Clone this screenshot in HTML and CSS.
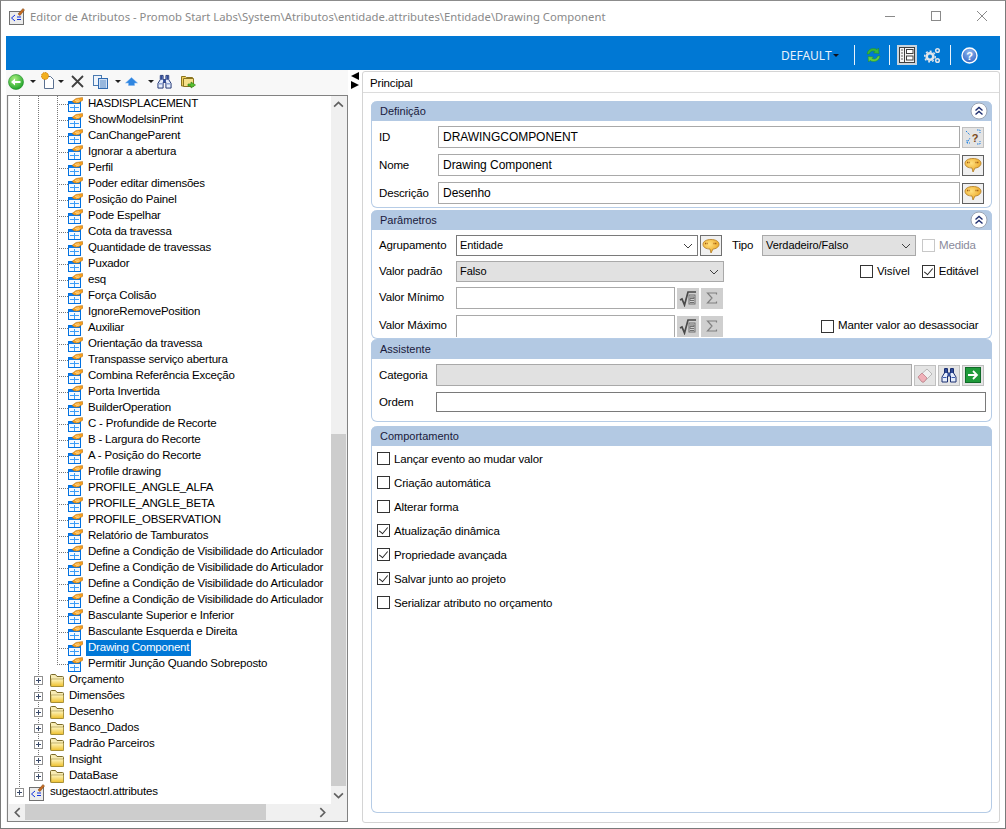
FILE: index.html
```html
<!DOCTYPE html>
<html lang="pt">
<head>
<meta charset="utf-8">
<title>Editor de Atributos</title>
<link rel="stylesheet" href="styles.css">
</head>
<body>
<svg class="defs" width="0" height="0" aria-hidden="true">
  <defs>
    <linearGradient id="gf" x1="0" y1="0" x2="0" y2="1"><stop offset="0" stop-color="#fff6c0"/><stop offset="1" stop-color="#eec02c"/></linearGradient>
    <radialGradient id="gb" cx=".4" cy=".35" r=".8"><stop offset="0" stop-color="#ffe080"/><stop offset="1" stop-color="#e89a10"/></radialGradient>
    <radialGradient id="gg" cx=".4" cy=".3" r=".8"><stop offset="0" stop-color="#a8f080"/><stop offset="1" stop-color="#109a20"/></radialGradient>
    <radialGradient id="gh" cx=".5" cy=".3" r=".8"><stop offset="0" stop-color="#8fb8f0"/><stop offset="1" stop-color="#2a5cc0"/></radialGradient>
    <symbol id="attr" viewBox="0 0 15 15">
      <rect x="0.5" y="4.5" width="12" height="10" fill="#f4f9ff" stroke="#0070e0"/>
      <rect x="1" y="5" width="11" height="2" fill="#0a7cf0"/>
      <path d="M6.5 8v6M2 10.500h9" stroke="#3a9cf8"/>
      <path d="M4 4.500 8 1.500 14.500 0.500 15 3 10.500 6 6.500 6z" fill="#f8a020" stroke="#a86810" stroke-width=".5"/>
      <path d="M7 3.500 11 2.800M8 5l4-1.200" stroke="#ffe8b0" stroke-width=".7"/>
    </symbol>
    <symbol id="folder" viewBox="0 0 16 16">
      <path d="M1.500 13.500V3.500q0-1 1-1h4l1.500 2h5.500q1 0 1 1v8q0 1-1 1h-11q-1 0-1-1z" fill="#f8ecb4" stroke="#7a6a2a"/>
      <path d="M2 7h12.500v7.500H2z" fill="url(#gf)" stroke="#a08c3a" stroke-width=".6"/>
    </symbol>
    <symbol id="xml" viewBox="0 0 16 17">
      <rect x="0.500" y="3.500" width="14" height="13" fill="#ececec" stroke="#707070"/>
      <path d="M6 7 2.500 10 6 13" fill="none" stroke="#1030e0"/>
      <path d="M8 9h4M8 11.500h4" stroke="#1030e0"/>
      <path d="M9 6 14 0.500l1.500 1.500L11 7.500z" fill="#c86a20" stroke="#704010" stroke-width=".5"/>
    </symbol>
    <symbol id="bubble" viewBox="0 0 18 18">
      <path d="M9 2.500c4.500 0 8 1.800 8 4.800s-3.500 4.700-6 4.700l-2 4-1-4C4 12 1 10.300 1 7.300S4.500 2.500 9 2.500z" fill="url(#gb)" stroke="#b07a20" stroke-width=".8"/>
      <path d="M3 6.500h3M11.500 6.500h3.500" stroke="#a05a10" stroke-width="1.500" stroke-dasharray="1 .6"/>
    </symbol>
    <symbol id="binoc" viewBox="0 0 16 16">
      <path d="M3.500 1.500h3V6h3V1.500h3V6l2.500 4v5H9.500V9h-3v6H1v-5l2.500-4z" fill="#e6eefc" stroke="#1a2f70"/>
      <path d="M4 2h2v4H4zM10 2h2v4h-2zM6.500 6h3v3h-3z" fill="#2f4a98"/>
      <path d="M2 10h3.500v1H2zM10.500 10H14v1h-3.500z" fill="#3a5ab0"/>
    </symbol>
    <symbol id="sqrt" viewBox="0 0 18 18">
      <path d="M1 11l2-1 2.500 6L9 3h8" fill="none" stroke="#4a4a4a" stroke-width="1.700"/>
      <rect x="10" y="6" width="6" height="9" fill="none" stroke="#707070"/>
      <path d="M11 8h4v1.500h-4v2h4M11 13.500h4" fill="none" stroke="#707070"/>
    </symbol>
    <symbol id="sigma" viewBox="0 0 12 12">
      <path d="M10.500 2.500V1h-9l4.500 5-4.500 5h9V9.500" fill="none" stroke="#808080" stroke-width="1.200"/>
    </symbol>
    <symbol id="chev" viewBox="0 0 10 6">
      <path d="M1 1l4 4 4-4" fill="none" stroke="#404040" stroke-width="1"/>
    </symbol>
    <symbol id="coll" viewBox="0 0 18 18">
      <circle cx="9" cy="9" r="8" fill="#fff" stroke="#9aa4b4"/>
      <path d="M5.500 8.500 9 5.500l3.500 3M5.500 12.500 9 9.500l3.500 3" fill="none" stroke="#1f2f70" stroke-width="1.400"/>
    </symbol>
  </defs>
</svg>

<div class="window">
  <header class="titlebar">
    <svg class="app-icon" width="16" height="17"><use href="#xml"/></svg>
    <span class="title">Editor de Atributos - Promob Start Labs\System\Atributos\entidade.attributes\Entidade\Drawing Component</span>
    <div class="winctl">
      <svg width="12" height="12" viewBox="0 0 12 12"><path d="M1 6.500h10" stroke="#8a8a8a"/></svg>
      <svg width="12" height="12" viewBox="0 0 12 12"><rect x="1.500" y="1.500" width="9" height="9" fill="none" stroke="#8a8a8a"/></svg>
      <svg width="12" height="12" viewBox="0 0 12 12"><path d="M1 1l10 10M11 1 1 11" stroke="#8a8a8a"/></svg>
    </div>
  </header>

  <div class="bluebar">
    <span class="bb-default">DEFAULT</span>
    <span class="bb-caret"></span>
    <span class="bb-sep"></span>
    <svg class="bb-refresh" width="17" height="18" viewBox="0 0 17 18">
      <path d="M2 8c.5-3.500 3-5.500 6.500-5.500 1.500 0 2.500.5 3.500 1l1.500-1.500.5 5.500-5.500-.5 1.500-1.500c-2.500-1-5-.5-5.500 2.500z" fill="#3ab83a" stroke="#1f8a2a" stroke-width=".5"/>
      <path d="M15 10c-.5 3.500-3 5.500-6.500 5.500-1.500 0-2.500-.5-3.500-1L3.500 16 3 10.500l5.500.5L7 12.500c2.500 1 5 .5 5.500-2.500z" fill="#63d040" stroke="#1f8a2a" stroke-width=".5"/>
    </svg>
    <span class="bb-sep sep2"></span>
    <span class="bb-layout">
      <svg width="16" height="16" viewBox="0 0 16 16">
        <rect x=".5" y=".5" width="15" height="15" fill="#f4f4f4" stroke="#404040"/>
        <path d="M5.500 1v14" stroke="#404040"/>
        <path d="M2 3h2M2 6h2M2 9h2M2 12h2" stroke="#606060"/>
        <rect x="7.500" y="2.500" width="6.500" height="4" fill="#fff" stroke="#404040"/>
        <rect x="7.500" y="9" width="6.500" height="4" fill="#fff" stroke="#404040"/>
      </svg>
    </span>
    <svg class="bb-gear" width="17" height="17" viewBox="0 0 17 17">
      <circle cx="6" cy="9.500" r="3.300" fill="none" stroke="#e0e4ea" stroke-width="2.600"/>
      <circle cx="6" cy="9.500" r="5.300" fill="none" stroke="#e0e4ea" stroke-width="1.500" stroke-dasharray="2 2"/>
      <circle cx="13.500" cy="3.500" r="1.800" fill="none" stroke="#e0e4ea" stroke-width="1.500"/>
      <circle cx="13.500" cy="13.500" r="1.800" fill="none" stroke="#e0e4ea" stroke-width="1.500"/>
    </svg>
    <span class="bb-sep sep3"></span>
    <svg class="bb-help" width="17" height="17" viewBox="0 0 17 17">
      <circle cx="8.500" cy="8.500" r="7.500" fill="url(#gh)" stroke="#fff" stroke-width="1.400"/>
      <text x="8.500" y="12.500" class="help-q">?</text>
    </svg>
  </div>

  <main class="content">
    <section class="left">
      <div class="toolbar">
        <svg class="t-back" width="16" height="16" viewBox="0 0 16 16"><circle cx="8" cy="8" r="7.500" fill="url(#gg)" stroke="#1a8a20" stroke-width=".6"/><path d="M3 8l4-3.500V7h5.500v2H7v2.500z" fill="#fff"/></svg>
        <span class="caret c1"></span>
        <svg class="t-new" width="15" height="17" viewBox="0 0 15 17"><path d="M3.500 4.500h6l3 3v9h-9z" fill="#fff" stroke="#5a7090"/><circle cx="4" cy="4" r="3.500" fill="#f2b020" stroke="#d08010" stroke-dasharray="1.500 .8"/></svg>
        <span class="caret c2"></span>
        <svg class="t-x" width="13" height="13" viewBox="0 0 13 13"><path d="M1 1l11 11M12 1 1 12" stroke="#404040" stroke-width="1.800"/></svg>
        <svg class="t-copy" width="15" height="14" viewBox="0 0 15 14"><rect x=".5" y=".5" width="8" height="10" fill="#eef4fc" stroke="#4a7ab0"/><rect x="5.500" y="3.500" width="9" height="10" fill="#cfe0f6" stroke="#2f6ab0"/><path d="M7 6h6M7 8h6M7 10h6M7 12h6" stroke="#2f6ab0" stroke-width=".7"/></svg>
        <span class="caret c3"></span>
        <svg class="t-up" width="13" height="9" viewBox="0 0 13 9"><path d="M6.500.5l6 5.500H9.500v2.500h-6V6H.5z" fill="#2f86e0" stroke="#7ab0f0" stroke-width=".5"/></svg>
        <span class="caret c4"></span>
        <svg class="t-bin" width="15" height="15"><use href="#binoc"/></svg>
        <svg class="t-fold" width="15" height="15" viewBox="0 0 15 15"><path d="M.5 12V2.500h4l1 1h6v8.500z" fill="#f0d060" stroke="#8a7420"/><path d="M2.500 4.500h10v8h-10z" fill="#f6e08a" stroke="#8a7420"/><path d="M7 10h3V8l4.500 3-4.500 3v-2H7z" fill="#58c030" stroke="#2a7a18" stroke-width=".6"/></svg>
      </div>
      <div class="treebox">
        <div class="tree-main">
          <div class="tree">
            <div class="g g1">
              <div class="g g2">
                <div class="g g3">
                  <div class="row leaf"><svg class="ic" width="15" height="15"><use href="#attr"/></svg><span class="lb">HASDISPLACEMENT</span></div>
                  <div class="row leaf"><svg class="ic" width="15" height="15"><use href="#attr"/></svg><span class="lb">ShowModelsinPrint</span></div>
                  <div class="row leaf"><svg class="ic" width="15" height="15"><use href="#attr"/></svg><span class="lb">CanChangeParent</span></div>
                  <div class="row leaf"><svg class="ic" width="15" height="15"><use href="#attr"/></svg><span class="lb">Ignorar a abertura</span></div>
                  <div class="row leaf"><svg class="ic" width="15" height="15"><use href="#attr"/></svg><span class="lb">Perfil</span></div>
                  <div class="row leaf"><svg class="ic" width="15" height="15"><use href="#attr"/></svg><span class="lb">Poder editar dimensões</span></div>
                  <div class="row leaf"><svg class="ic" width="15" height="15"><use href="#attr"/></svg><span class="lb">Posição do Painel</span></div>
                  <div class="row leaf"><svg class="ic" width="15" height="15"><use href="#attr"/></svg><span class="lb">Pode Espelhar</span></div>
                  <div class="row leaf"><svg class="ic" width="15" height="15"><use href="#attr"/></svg><span class="lb">Cota da travessa</span></div>
                  <div class="row leaf"><svg class="ic" width="15" height="15"><use href="#attr"/></svg><span class="lb">Quantidade de travessas</span></div>
                  <div class="row leaf"><svg class="ic" width="15" height="15"><use href="#attr"/></svg><span class="lb">Puxador</span></div>
                  <div class="row leaf"><svg class="ic" width="15" height="15"><use href="#attr"/></svg><span class="lb">esq</span></div>
                  <div class="row leaf"><svg class="ic" width="15" height="15"><use href="#attr"/></svg><span class="lb">Força Colisão</span></div>
                  <div class="row leaf"><svg class="ic" width="15" height="15"><use href="#attr"/></svg><span class="lb">IgnoreRemovePosition</span></div>
                  <div class="row leaf"><svg class="ic" width="15" height="15"><use href="#attr"/></svg><span class="lb">Auxiliar</span></div>
                  <div class="row leaf"><svg class="ic" width="15" height="15"><use href="#attr"/></svg><span class="lb">Orientação da travessa</span></div>
                  <div class="row leaf"><svg class="ic" width="15" height="15"><use href="#attr"/></svg><span class="lb">Transpasse serviço abertura</span></div>
                  <div class="row leaf"><svg class="ic" width="15" height="15"><use href="#attr"/></svg><span class="lb">Combina Referência Exceção</span></div>
                  <div class="row leaf"><svg class="ic" width="15" height="15"><use href="#attr"/></svg><span class="lb">Porta Invertida</span></div>
                  <div class="row leaf"><svg class="ic" width="15" height="15"><use href="#attr"/></svg><span class="lb">BuilderOperation</span></div>
                  <div class="row leaf"><svg class="ic" width="15" height="15"><use href="#attr"/></svg><span class="lb">C - Profundide de Recorte</span></div>
                  <div class="row leaf"><svg class="ic" width="15" height="15"><use href="#attr"/></svg><span class="lb">B - Largura do Recorte</span></div>
                  <div class="row leaf"><svg class="ic" width="15" height="15"><use href="#attr"/></svg><span class="lb">A - Posição do Recorte</span></div>
                  <div class="row leaf"><svg class="ic" width="15" height="15"><use href="#attr"/></svg><span class="lb">Profile drawing</span></div>
                  <div class="row leaf"><svg class="ic" width="15" height="15"><use href="#attr"/></svg><span class="lb">PROFILE_ANGLE_ALFA</span></div>
                  <div class="row leaf"><svg class="ic" width="15" height="15"><use href="#attr"/></svg><span class="lb">PROFILE_ANGLE_BETA</span></div>
                  <div class="row leaf"><svg class="ic" width="15" height="15"><use href="#attr"/></svg><span class="lb">PROFILE_OBSERVATION</span></div>
                  <div class="row leaf"><svg class="ic" width="15" height="15"><use href="#attr"/></svg><span class="lb">Relatório de Tamburatos</span></div>
                  <div class="row leaf"><svg class="ic" width="15" height="15"><use href="#attr"/></svg><span class="lb">Define a Condição de Visibilidade do Articulador</span></div>
                  <div class="row leaf"><svg class="ic" width="15" height="15"><use href="#attr"/></svg><span class="lb">Define a Condição de Visibilidade do Articulador</span></div>
                  <div class="row leaf"><svg class="ic" width="15" height="15"><use href="#attr"/></svg><span class="lb">Define a Condição de Visibilidade do Articulador</span></div>
                  <div class="row leaf"><svg class="ic" width="15" height="15"><use href="#attr"/></svg><span class="lb">Define a Condição de Visibilidade do Articulador</span></div>
                  <div class="row leaf"><svg class="ic" width="15" height="15"><use href="#attr"/></svg><span class="lb">Basculante Superior e Inferior</span></div>
                  <div class="row leaf"><svg class="ic" width="15" height="15"><use href="#attr"/></svg><span class="lb">Basculante Esquerda e Direita</span></div>
                  <div class="row leaf"><svg class="ic" width="15" height="15"><use href="#attr"/></svg><span class="lb sel">Drawing Component</span></div>
                  <div class="row leaf"><svg class="ic" width="15" height="15"><use href="#attr"/></svg><span class="lb">Permitir Junção Quando Sobreposto</span></div>
                </div>
                <div class="row fold"><span class="plus"></span><svg class="ic" width="16" height="16"><use href="#folder"/></svg><span class="lb">Orçamento</span></div>
                <div class="row fold"><span class="plus"></span><svg class="ic" width="16" height="16"><use href="#folder"/></svg><span class="lb">Dimensões</span></div>
                <div class="row fold"><span class="plus"></span><svg class="ic" width="16" height="16"><use href="#folder"/></svg><span class="lb">Desenho</span></div>
                <div class="row fold"><span class="plus"></span><svg class="ic" width="16" height="16"><use href="#folder"/></svg><span class="lb">Banco_Dados</span></div>
                <div class="row fold"><span class="plus"></span><svg class="ic" width="16" height="16"><use href="#folder"/></svg><span class="lb">Padrão Parceiros</span></div>
                <div class="row fold"><span class="plus"></span><svg class="ic" width="16" height="16"><use href="#folder"/></svg><span class="lb">Insight</span></div>
                <div class="row fold"><span class="plus"></span><svg class="ic" width="16" height="16"><use href="#folder"/></svg><span class="lb">DataBase</span></div>
              </div>
              <div class="row root"><span class="plus"></span><svg class="ic" width="16" height="17"><use href="#xml"/></svg><span class="lb">sugestaoctrl.attributes</span></div>
            </div>
          </div>
          <div class="vscroll">
            <svg width="11" height="7" viewBox="0 0 10 6"><path d="M1 5l4-4 4 4" fill="none" stroke="#606060" stroke-width="1.500"/></svg>
            <span class="vtrack"><span class="vthumb"></span></span>
            <svg width="11" height="7" viewBox="0 0 10 6"><path d="M1 1l4 4 4-4" fill="none" stroke="#606060" stroke-width="1.500"/></svg>
          </div>
        </div>
        <div class="hscroll">
          <svg width="7" height="11" viewBox="0 0 6 10"><path d="M5 1 1 5l4 4" fill="none" stroke="#606060" stroke-width="1.500"/></svg>
          <span class="htrack"><span class="hthumb"></span></span>
          <svg width="7" height="11" viewBox="0 0 6 10"><path d="M1 1l4 4-4 4" fill="none" stroke="#606060" stroke-width="1.500"/></svg>
        </div>
      </div>
    </section>

    <div class="splitter"><span class="arr-l"></span><span class="arr-r"></span></div>

    <section class="right">
      <div class="tab">Principal</div>
      <div class="panel">
        <div class="group def">
          <div class="ghead"><span>Definição</span><svg width="18" height="18"><use href="#coll"/></svg></div>
          <div class="frow"><label class="fl w59">ID</label><span class="inp grow">DRAWINGCOMPONENT</span><span class="btn"><svg width="18" height="18" viewBox="0 0 18 18"><path d="M2 3l4 4M13 2h3v3M3 15l3-5M3 12v3h3M13 16h3v-3" fill="none" stroke="#2080e0" stroke-dasharray="1.500 1"/><text x="11" y="14" class="q">?</text></svg></span></div>
          <div class="frow"><label class="fl w59">Nome</label><span class="inp grow">Drawing Component</span><span class="btn dark"><svg width="18" height="18"><use href="#bubble"/></svg></span></div>
          <div class="frow"><label class="fl w59">Descrição</label><span class="inp grow">Desenho</span><span class="btn dark"><svg width="18" height="18"><use href="#bubble"/></svg></span></div>
        </div>

        <div class="group par">
          <div class="ghead"><span>Parâmetros</span><svg width="18" height="18"><use href="#coll"/></svg></div>
          <div class="prow r1">
            <label class="fl w77">Agrupamento</label>
            <span class="sel-box enabled w242"><span>Entidade</span><svg width="10" height="6"><use href="#chev"/></svg></span>
            <span class="btn dark lite"><svg width="18" height="18"><use href="#bubble"/></svg></span>
            <label class="fl tipo">Tipo</label>
            <span class="sel-box w154"><span>Verdadeiro/Falso</span><svg width="10" height="6"><use href="#chev"/></svg></span>
            <label class="chk off medida"><span class="cb"></span>Medida</label>
          </div>
          <div class="prow r2">
            <label class="fl w77">Valor padrão</label>
            <span class="sel-box w268"><span>Falso</span><svg width="10" height="6"><use href="#chev"/></svg></span>
            <label class="chk visivel"><span class="cb"></span>Visível</label>
            <label class="chk"><span class="cb on"></span>Editável</label>
          </div>
          <div class="prow r3">
            <label class="fl w77">Valor Mínimo</label>
            <span class="inp w219"></span>
            <span class="btn sq g"><svg width="18" height="18"><use href="#sqrt"/></svg></span>
            <span class="btn sq g"><svg width="12" height="12"><use href="#sigma"/></svg></span>
          </div>
          <div class="prow r4">
            <label class="fl w77">Valor Máximo</label>
            <span class="inp w219 cut"></span>
            <span class="btn sq g"><svg width="18" height="18"><use href="#sqrt"/></svg></span>
            <span class="btn sq g"><svg width="12" height="12"><use href="#sigma"/></svg></span>
            <label class="chk manter"><span class="cb"></span>Manter valor ao desassociar</label>
          </div>
        </div>

        <div class="group ass">
          <div class="ghead"><span>Assistente</span></div>
          <div class="arow a1">
            <label class="fl w57">Categoria</label>
            <span class="inp dis w476"></span>
            <span class="btn"><svg width="18" height="18" viewBox="0 0 18 18"><path d="M2 11l9-8 5 5-8 8H6z" fill="#f0f0f0" stroke="#b8b8b8"/><path d="M2 11l4-4 5 5-3 4H6z" fill="#f0b0b8" stroke="#c89098"/></svg></span>
            <span class="btn"><svg width="16" height="16"><use href="#binoc"/></svg></span>
            <span class="btn"><svg width="16" height="16" viewBox="0 0 16 16"><rect x=".5" y=".5" width="15" height="15" fill="#1f9a3a" stroke="#106a28"/><path d="M3 8h8M8 4l4 4-4 4" fill="none" stroke="#fff" stroke-width="1.800"/></svg></span>
          </div>
          <div class="arow a2">
            <label class="fl w57">Ordem</label>
            <span class="inp dk grow"></span>
          </div>
        </div>

        <div class="group comp">
          <div class="ghead"><span>Comportamento</span></div>
          <div class="checks">
            <label class="chk"><span class="cb"></span>Lançar evento ao mudar valor</label>
            <label class="chk"><span class="cb"></span>Criação automática</label>
            <label class="chk"><span class="cb"></span>Alterar forma</label>
            <label class="chk"><span class="cb on"></span>Atualização dinâmica</label>
            <label class="chk"><span class="cb on"></span>Propriedade avançada</label>
            <label class="chk"><span class="cb on"></span>Salvar junto ao projeto</label>
            <label class="chk"><span class="cb"></span>Serializar atributo no orçamento</label>
          </div>
        </div>
      </div>
    </section>
  </main>
</div>
</body>
</html>
```

FILE: styles.css
```css
* { box-sizing: border-box; }
html, body { margin: 0; padding: 0; height: 100%; }
body { background: #fff; font-family: "Liberation Sans", Arial, sans-serif; font-size: 11.5px; letter-spacing: -.15px; color: #000; overflow: hidden; }
.defs { display: block; height: 0; }
.window { width: 1006px; height: 829px; border: 1px solid #7a7a7a; border-top-color: #8c8c8c; display: flex; flex-direction: column; background: #fff; }

.titlebar { height: 35px; flex: none; display: flex; align-items: center; padding: 0 0 5px 8px; }
.app-icon { flex: none; margin-right: 5px; }
.title { font-family: "Noto Sans", sans-serif; font-size: 11.3px; letter-spacing: 0; color: #8a8a8a; white-space: nowrap; }
.winctl { margin-left: auto; display: flex; gap: 34px; padding-right: 17px; }

.bluebar { height: 34px; flex: none; margin: 0 5px; background: #0078d4; display: flex; align-items: center; padding-top: 4px; }
.bb-default { margin-left: 775px; font-family: "Noto Sans", sans-serif; font-size: 12px; letter-spacing: 0; color: #e8f2fb; width: 47px; white-space: nowrap; }
.bb-caret { margin-left: 5px; border-top: 3px solid #10101c; border-left: 3px solid transparent; border-right: 3px solid transparent; }
.bb-sep { width: 1px; height: 20px; background: #e8f2fb; margin-left: 15px; }
.bb-refresh { margin-left: 10px; }
.sep2 { margin-left: 7px; }
.bb-layout { margin-left: 7px; width: 20px; height: 20px; background: #c8d4de; display: flex; align-items: center; justify-content: center; }
.bb-gear { margin-left: 7px; }
.sep3 { margin-left: 9px; }
.bb-help { margin-left: 10px; }
.help-q { font-family: "Liberation Sans", sans-serif; font-size: 11px; font-weight: bold; fill: #fff; text-anchor: middle; }

.content { flex: 1; min-height: 0; display: flex; padding: 0 5px 6px; }

.left { width: 342px; flex: none; display: flex; flex-direction: column; background: #f0f0f0; }
.toolbar { height: 25px; flex: none; display: flex; align-items: center; background: #f8f8f8; padding: 0 0 2px 2px; }
.caret { border-top: 3px solid #202020; border-left: 3px solid transparent; border-right: 3px solid transparent; flex: none; }
.c1 { margin-left: 6px; }
.t-new { margin-left: 5px; margin-top: -2px; }
.c2 { margin-left: 2px; }
.t-x { margin-left: 7px; }
.t-copy { margin-left: 9px; }
.c3 { margin-left: 7px; }
.t-up { margin-left: 4px; }
.c4 { margin-left: 10px; }
.t-bin { margin-left: 3px; }
.t-fold { margin-left: 9px; }

.treebox { flex: 1; min-height: 0; border: 1px solid #828282; margin-left: 1px; display: flex; flex-direction: column; background: #f0f0f0; padding-bottom: 1px; }
.tree-main { flex: 1; min-height: 0; display: flex; padding-right: 1px; }
.tree { flex: 1; min-width: 0; background: #fff; overflow: hidden; margin-left: 1px; }
.g { background-repeat: no-repeat; background-image: repeating-linear-gradient(180deg, #777 0 1px, transparent 1px 2px); background-size: 1px calc(100% - 8px); }
.g1 { background-position: 10px 0; }
.g2 { background-position: 29px 0; }
.g3 { background-position: 48px 0; }
.row { height: 16px; display: flex; align-items: center; white-space: nowrap; position: relative; }
.leaf { padding-left: 48px; }
.leaf::before { content: ""; width: 11px; height: 1px; flex: none; background: repeating-linear-gradient(90deg, #777 0 1px, transparent 1px 2px); }
.fold { padding-left: 25px; }
.root { padding-left: 6px; }
.plus { width: 9px; height: 9px; flex: none; border: 1px solid #909090; background: linear-gradient(90deg, #3a4a6a, #3a4a6a) center / 5px 1px no-repeat, linear-gradient(#3a4a6a, #3a4a6a) center / 1px 5px no-repeat, #fff; margin-right: 5px; }
.fold .plus { margin-right: 6px; }
.ic { flex: none; }
.leaf .lb { margin-left: 3px; }
.fold .lb { margin-left: 2px; }
.root .lb { margin-left: 3px; }
.lb { padding: 0 2px 1px; line-height: 15px; letter-spacing: -.21px; }
.lb.sel { background: #0078d7; color: #fff; }

.vscroll { width: 15px; flex: none; display: flex; flex-direction: column; align-items: center; background: #f0f0f0; padding: 5px 0 5px; }
.vtrack { flex: 1; width: 100%; display: flex; flex-direction: column; justify-content: flex-end; padding: 0 0 6px; }
.vthumb { display: block; height: 352px; background: #cdcdcd; }
.hscroll { height: 16px; flex: none; display: flex; align-items: center; padding: 0 21px 0 6px; background: #f0f0f0; }
.htrack { flex: 1; height: 100%; padding: 0 0 0 4px; }
.hthumb { display: block; width: 241px; height: 100%; background: #cdcdcd; }

.splitter { width: 14px; flex: none; display: flex; flex-direction: column; align-items: center; padding-top: 2px; }
.arr-l { border-right: 8px solid #000; border-top: 4px solid transparent; border-bottom: 4px solid transparent; margin-bottom: 1px; }
.arr-r { border-left: 8px solid #000; border-top: 4px solid transparent; border-bottom: 4px solid transparent; }

.right { flex: 1; min-width: 0; border: 1px solid #d4d4d4; border-radius: 3px; margin-top: 1px; margin-bottom: -1px; display: flex; flex-direction: column; }
.tab { height: 21px; flex: none; line-height: 22px; padding-left: 7px; border-bottom: 1px solid #dcdcdc; }
.panel { flex: 1; min-height: 0; padding: 8px 7px 9px 8px; display: flex; flex-direction: column; }

.group { border: 1px solid #b6cce6; border-top: 0; border-radius: 6px; flex: none; }
.ghead { height: 20px; background: #b3c9e3; border-radius: 6px 6px 0 0; margin: 0 -1px; padding: 0 4px 0 9px; display: flex; align-items: center; justify-content: space-between; color: #1a1a3c; font-size: 11px; letter-spacing: 0; }
.def { height: 107px; }
.par { height: 129px; margin-top: 2px; }
.ass { height: 83px; margin-top: 0; }
.comp { flex: 1; margin-top: 4px; }

.fl { white-space: nowrap; flex: none; }
.w59 { width: 59px; }
.w77 { width: 77px; }
.w57 { width: 57px; }
.frow { display: flex; align-items: center; height: 22px; margin: 5px 7px 0 7px; }
.frow + .frow { margin-top: 6px; }
.inp { height: 22px; border: 1px solid #a9a9a9; background: #fff; padding-left: 4px; line-height: 20px; display: block; flex: none; font-size: 12px; letter-spacing: -.04px; }
.grow { flex: 1; min-width: 0; }
.btn { width: 22px; height: 21px; flex: none; margin-left: 2px; background: #e4e4e4; border: 1px solid #c0c0c0; display: flex; align-items: center; justify-content: center; }
.btn.dark { border: 1px solid #606060; background: #f0f0f0; }
.btn.dark.lite { background: #f0f0f0; border-color: #707070; }
.q { font-family: "Liberation Sans", sans-serif; font-size: 11px; font-weight: bold; fill: #7a4a20; text-anchor: middle; }

.prow { display: flex; align-items: center; height: 22px; margin-left: 7px; }
.prow .fl { padding-bottom: 2px; }
.prow .chk { padding-bottom: 2px; }
.prow .cb { margin-top: 2px; }
.r1 { margin-top: 5px; height: 21px; }
.r2 { margin-top: 5px; height: 21px; }
.r3 { margin-top: 5px; }
.r4 { margin-top: 6px; }
.w242 { width: 242px; }
.w154 { width: 154px; }
.w268 { width: 268px; }
.w219 { width: 219px; }
.w476 { width: 476px; }
.sel-box { height: 21px; flex: none; border: 1px solid #a9a9a9; background: #e1e1e1; display: flex; align-items: center; justify-content: space-between; padding: 0 4px 1px 3px; font-size: 11px; letter-spacing: -.06px; }
.sel-box svg { margin-top: 1px; }
.sel-box.enabled { background: #fff; border-color: #7a7a7a; }
.tipo { margin-left: 10px; width: 30px; }
.btn.sq { margin-left: 2px; }
.btn.sq:first-of-type { margin-left: 1px; }
.btn.g { background: #cfcfcf; border-color: #cfcfcf; }
.cut { height: 22px; border-bottom: 0; }

.chk { display: flex; align-items: center; white-space: nowrap; flex: none; }
.cb { width: 13px; height: 13px; flex: none; border: 1px solid #333; background: #fff; margin-right: 4px; position: relative; }
.cb.on::after { content: ""; position: absolute; left: 1px; top: 2px; width: 8px; height: 4px; border-left: 1.300px solid #222; border-bottom: 1.300px solid #222; transform: rotate(-50deg) scale(.95); transform-origin: center; }
.chk.off { color: #8a8a9a; }
.chk.off .cb { border-color: #c8c8c8; }
.medida { margin-left: 6px; }
.visivel { margin-left: 136px; margin-right: 12px; }
.manter { margin-left: 98px; }

.arow { display: flex; align-items: center; margin-left: 7px; }
.a1 { margin-top: 5px; height: 22px; }
.a2 { margin-top: 6px; height: 20px; margin-right: 5px; }
.a1 .btn:first-of-type { margin-left: 2px; }
.dis { background: #e1e1e1; }
.dk { border-color: #7a7a7a; height: 20px; }

.checks { display: flex; flex-direction: column; gap: 11px; padding: 6px 0 0 5px; }
.checks .chk { height: 13px; }
```
